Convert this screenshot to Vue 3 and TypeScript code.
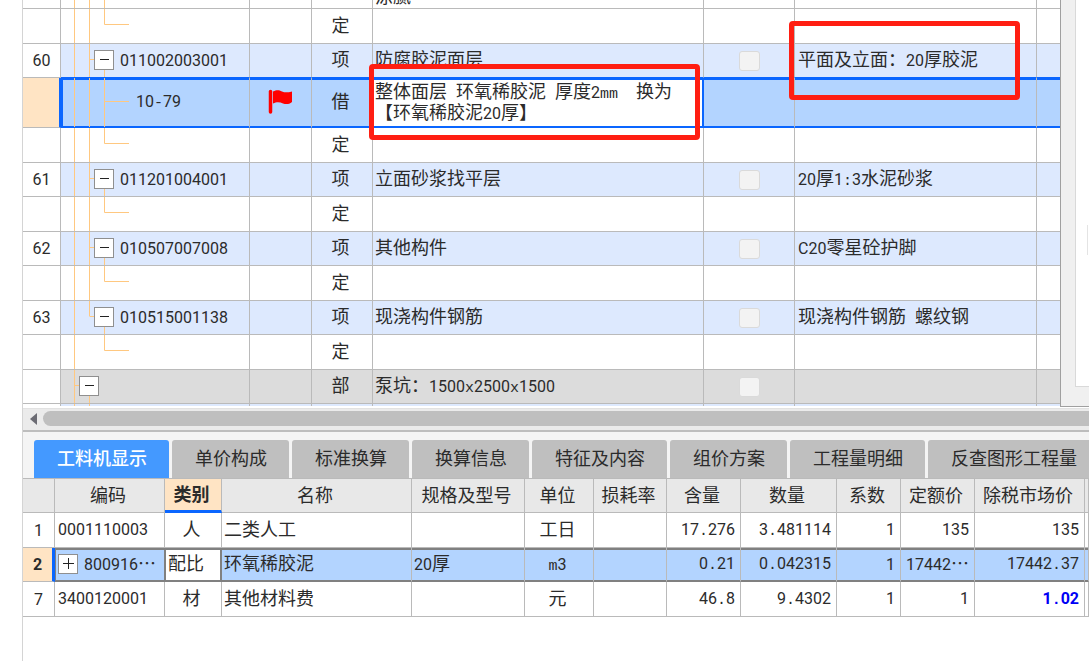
<script setup lang="ts">
import { h, type FunctionalComponent } from 'vue'

type Kind = 'cut' | 'rate' | 'item' | 'selected' | 'part' | 'tail'

interface BillRow {
  kind: Kind
  no?: string
  code?: string
  type?: string
  name?: string[]
  feature?: string
  check?: boolean
  height: number
  last?: boolean
  afterLast?: boolean
}

interface Material {
  no: string
  code: string
  category: string
  name: string
  spec: string
  unit: string
  content: string
  quantity: string
  factor: string
  quota: string
  market: string
  active?: boolean
  changed?: boolean
}

const billRows: BillRow[] = [
  { kind: 'cut', name: ['涂腻'], height: 8 },
  { kind: 'rate', type: '定', height: 34 },
  { kind: 'item', no: '60', code: '011002003001', type: '项', name: ['防腐胶泥面层'], feature: '平面及立面：20厚胶泥', check: true, height: 33 },
  { kind: 'selected', code: '10-79', type: '借', name: ['整体面层 环氧稀胶泥 厚度2mm  换为', '【环氧稀胶泥20厚】'], height: 49 },
  { kind: 'rate', type: '定', height: 34 },
  { kind: 'item', no: '61', code: '011201004001', type: '项', name: ['立面砂浆找平层'], feature: '20厚1:3水泥砂浆', check: true, height: 33 },
  { kind: 'rate', type: '定', height: 34 },
  { kind: 'item', no: '62', code: '010507007008', type: '项', name: ['其他构件'], feature: 'C20零星砼护脚', check: true, height: 33 },
  { kind: 'rate', type: '定', height: 34 },
  { kind: 'item', no: '63', code: '010515001138', type: '项', name: ['现浇构件钢筋'], feature: '现浇构件钢筋 螺纹钢', check: true, height: 33, last: true },
  { kind: 'rate', type: '定', height: 34, afterLast: true },
  { kind: 'part', type: '部', name: ['泵坑：1500x2500x1500'], check: true, height: 33 },
  { kind: 'tail', height: 1 },
]

// Tree guides, in pixels from the left edge of the code cell.
function guides(row: BillRow): string {
  const full = row.height + 1
  const mid = Math.round(row.height / 2) - 2
  const d: string[] = [`M13.5 0V${full}`]
  if (row.kind === 'part') {
    d.push(`M13.5 ${mid}.5H18`, `M28.5 ${mid + 9}V${full}`)
    return d.join('')
  }
  if (!row.afterLast) d.push(row.last ? `M28.5 0V${mid}` : `M28.5 0V${full}`)
  if (row.kind === 'item') d.push(`M28.5 ${mid}.5H33`, `M43.5 ${mid + 9}V${full}`)
  if (row.kind === 'rate') d.push(`M43.5 0V${mid}.5H68`)
  if (row.kind === 'selected') d.push(`M43.5 0V${full}`, `M43.5 ${mid}.5H68`)
  if (row.kind === 'cut') d.push(`M43.5 0V${full}`)
  return d.join('')
}

const tabs = ['工料机显示', '单价构成', '标准换算', '换算信息', '特征及内容', '组价方案', '工程量明细', '反查图形工程量']

const heads = ['', '编码', '类别', '名称', '规格及型号', '单位', '损耗率', '含量', '数量', '系数', '定额价', '除税市场价', '']

const materials: Material[] = [
  { no: '1', code: '0001110003', category: '人', name: '二类人工', spec: '', unit: '工日', content: '17.276', quantity: '3.481114', factor: '1', quota: '135', market: '135' },
  { no: '2', code: '800916…', category: '配比', name: '环氧稀胶泥', spec: '20厚', unit: 'm3', content: '0.21', quantity: '0.042315', factor: '1', quota: '17442…', market: '17442.37', active: true },
  { no: '7', code: '3400120001', category: '材', name: '其他材料费', spec: '', unit: '元', content: '46.8', quantity: '9.4302', factor: '1', quota: '1', market: '1.02', changed: true },
]

// Half-width characters take exactly half of a full-width one.
const Mixed: FunctionalComponent<{ text: string }> = (props) =>
  h(
    'span',
    { class: 'mixed' },
    (props.text.match(/[0-9C]+|[\x20-\x2f\x3a-\x42\x44-\x7e]+|[^\x20-\x7e]+/g) ?? []).map((part) =>
      h('span', { class: /^[0-9C]/.test(part) ? 'digits' : /^[\x20-\x7e]/.test(part) ? 'half' : 'full' }, part),
    ),
  )
Mixed.props = ['text']
</script>

<template>
  <main class="app">
    <div class="upper">
      <div class="bill-wrap">
        <table class="grid bill" aria-label="清单">
          <colgroup>
            <col class="b-no" /><col class="b-code" /><col class="b-flag" /><col class="b-type" />
            <col /><col class="b-check" /><col class="b-feature" /><col class="b-rest" />
          </colgroup>
          <tbody>
            <tr v-for="(row, i) in billRows" :key="i" :class="row.kind">
              <td class="no">{{ row.no }}</td>
              <td class="code">
                <svg class="guides" width="70" :height="row.height + 1" aria-hidden="true">
                  <path :d="guides(row)" />
                </svg>
                <div class="line">
                  <button v-if="row.kind === 'item' || row.kind === 'part'" class="toggle" type="button" aria-label="折叠">
                    <svg width="9" height="9" aria-hidden="true"><path d="M0 4.5H9" /></svg>
                  </button>
                  <Mixed v-if="row.code" :text="row.code" />
                </div>
              </td>
              <td class="flag">
                <svg v-if="row.kind === 'selected'" width="26" height="26" viewBox="0 0 26 26" aria-label="标记">
                  <path d="M2.500 2.500V23" stroke="#f00" stroke-width="3.500" stroke-linecap="round" />
                  <path d="M5 2.500C9 0.500 11 1 14 2.500C17 3.800 20 3.500 24 2.500V13C21 15.500 18 15.500 15 14.500C12 13 9 12.500 5 14.500Z" fill="#f00" />
                </svg>
              </td>
              <td class="type">{{ row.type }}</td>
              <td class="name">
                <div class="name-box">
                  <div v-for="text in row.name" :key="text" class="text-line"><Mixed :text="text" /></div>
                </div>
              </td>
              <td class="check"><input v-if="row.check" type="checkbox" disabled aria-label="选择" /></td>
              <td class="feature"><Mixed v-if="row.feature" :text="row.feature" /></td>
              <td></td>
            </tr>
          </tbody>
        </table>
      </div>
      <aside class="side"><div class="side-page"><div class="side-field"></div></div></aside>
    </div>

    <div class="scroll">
      <button type="button" class="arrow" aria-label="向左滚动">
        <svg width="7" height="12" aria-hidden="true"><path d="M7 0V12L0 6Z" fill="#6c6c74" /></svg>
      </button>
      <div class="thumb"></div>
    </div>

    <nav class="tabs">
      <button v-for="(tab, i) in tabs" :key="tab" type="button" :class="{ on: i === 0 }">{{ tab }}</button>
    </nav>

    <div class="detail-wrap">
      <table class="grid detail" aria-label="工料机显示">
        <colgroup>
          <col class="d-no" /><col class="d-code" /><col class="d-cat" /><col /><col class="d-spec" />
          <col class="d-unit" /><col class="d-loss" /><col class="d-content" /><col class="d-qty" />
          <col class="d-factor" /><col class="d-quota" /><col class="d-market" /><col class="d-rest" />
        </colgroup>
        <thead>
          <tr>
            <th v-for="(head, i) in heads" :key="i" :class="{ current: head === '类别' }">{{ head }}</th>
          </tr>
        </thead>
        <tbody>
          <tr v-for="m in materials" :key="m.no" :class="{ active: m.active }">
            <td class="no">{{ m.no }}</td>
            <td class="mat-code">
              <div class="line">
                <button v-if="m.active" class="toggle" type="button" aria-label="展开">
                  <svg width="11" height="11" aria-hidden="true"><path d="M0 5.500H11M5.500 0V11" /></svg>
                </button>
                <Mixed :text="m.code" />
              </div>
            </td>
            <td class="center cat">{{ m.category }}</td>
            <td class="left">{{ m.name }}</td>
            <td class="left"><Mixed :text="m.spec" /></td>
            <td class="center"><Mixed :text="m.unit" /></td>
            <td></td>
            <td class="num"><Mixed :text="m.content" /></td>
            <td class="num"><Mixed :text="m.quantity" /></td>
            <td class="num"><Mixed :text="m.factor" /></td>
            <td class="num"><Mixed :text="m.quota" /></td>
            <td class="num" :class="{ changed: m.changed }"><Mixed :text="m.market" /></td>
            <td></td>
          </tr>
        </tbody>
      </table>
    </div>

    <div class="mark mark-name"></div>
    <div class="mark mark-feature"></div>
  </main>
</template>

<style>
body {
  margin: 0;
  background: #fff;
}
</style>

<style scoped>
.app {
  position: relative;
  min-height: 100vh;
  margin-left: 22px;
  border-left: 1px solid #d4d4d4;
  box-sizing: border-box;
  overflow: hidden;
  color: #2b2b2b;
  font: 18px/21px "Noto Sans CJK SC", sans-serif;
  text-spacing-trim: space-all;
}
button {
  font: inherit;
  margin: 0;
  padding: 0;
  border: 0;
}
.app :deep(.mixed) {
  white-space: pre;
}
.app :deep(.digits) {
  font: 16px/1 Roboto, sans-serif;
}
.app :deep(.half) {
  font: 15px/1 "Liberation Mono", monospace;
}
.app :deep(.full) {
  line-height: 1;
}

.upper {
  display: flex;
  align-items: flex-start;
}
.bill-wrap {
  flex: 1;
  min-width: 0;
}
.grid {
  width: 100%;
  table-layout: fixed;
  border-collapse: separate;
  border-spacing: 0;
}
.grid td,
.grid th {
  box-sizing: border-box;
  padding: 0 0 4px;
  border-right: 1px solid #bababa;
  border-bottom: 1px solid #bababa;
  white-space: nowrap;
  overflow: hidden;
  vertical-align: middle;
}
.grid td.no,
.grid td.check,
.grid td.flag,
.cut td.name,
.grid .tail td {
  padding-bottom: 0;
}
.grid td.flag {
  padding-bottom: 2px;
}
.grid .tail td.flag,
.grid .cut td {
  padding-bottom: 0;
}
.b-no { width: 38px; }
.b-code { width: 189px; }
.b-flag { width: 62px; }
.b-type { width: 61px; }
.b-check { width: 91px; }
.b-feature { width: 242px; }
.b-rest { width: 23px; }

.bill td:last-child {
  border-right: 0;
}
.cut td { height: 9px; }
.rate td { height: 35px; }
.item td,
.part td { height: 34px; }
.selected td { height: 50px; }
.tail td {
  height: 2px;
  border-bottom: 0;
}
.item td,
.tail td {
  background: #dde9fe;
}
.part td {
  background: #dcdcdc;
}
.selected td {
  background: #b3d4ff;
  border-bottom-color: #0a66ff;
  box-shadow: inset 0 2px #0a66ff, inset 0 -1px #0a66ff;
}
.item:has(+ .selected) td:not(.no) {
  border-bottom-color: #0a66ff;
}
.bill td.no {
  background: #fff;
}
.bill .selected td.no {
  background: #ffe4c4;
  border-right: 2px solid #0a66ff;
  border-bottom-color: #bababa;
  box-shadow: none;
}
.bill .selected td.code {
  box-shadow: inset 2px 2px #0a66ff, inset 0 -1px #0a66ff;
}
.bill .selected td.name {
  background: #fff;
  border-right-color: #0a66ff;
  box-shadow: inset 1px 2px #0a66ff, inset -1px -1px #0a66ff;
}
.no {
  text-align: center;
  font: 16px/21px Roboto, sans-serif;
}
.bill .code {
  position: relative;
  padding-bottom: 2px;
}
.guides {
  position: absolute;
  left: 0;
  top: 0;
}
.guides path {
  fill: none;
  stroke: #ffc880;
}
.line {
  position: relative;
  display: flex;
  align-items: center;
  height: 20px;
}
.line .mixed {
  padding-bottom: 3px;
}
.item .line { padding-left: 33px; }
.part .line { padding-left: 18px; }
.selected .line { padding-left: 75px; }
.cut .line,
.tail .line { height: 0; }
.toggle {
  display: grid;
  place-items: center;
  box-sizing: border-box;
  width: 20px;
  height: 20px;
  margin-right: 6px;
  border: 1px solid #8f8f8f;
  background: #fff;
}
.toggle path {
  fill: none;
  stroke: #222;
}
.flag {
  text-align: center;
}
.flag svg {
  display: block;
  margin: 0 auto;
}
.type {
  text-align: center;
}
.grid td.type,
.grid th {
  padding-right: 3px;
}
.grid .name {
  padding-left: 2px;
}
.grid .feature {
  padding-left: 3px;
}
.cut .name-box {
  display: flex;
  align-items: flex-end;
  box-sizing: border-box;
  height: 8px;
  padding-bottom: 2px;
}
.text-line {
  height: 21px;
}
.check input {
  appearance: none;
  display: block;
  box-sizing: border-box;
  width: 21px;
  height: 20px;
  margin: 0 auto;
  border: 1px solid #dadada;
  border-radius: 3px;
  background: #f3f3f3;
}

.side {
  box-sizing: border-box;
  width: 29px;
  height: 407px;
  padding-left: 14px;
  border-left: 1px solid #a0a0a0;
  border-bottom: 1px solid #a0a0a0;
  background: #f0f0f0;
}
.side-page {
  box-sizing: border-box;
  height: 387px;
  padding: 225px 0 0 11px;
  border-left: 1px solid #d9d9d9;
  border-bottom: 1px solid #d9d9d9;
  background: #fff;
}
.side-field {
  height: 30px;
  border-left: 1px solid #e4e4e4;
}

.scroll {
  display: flex;
  align-items: center;
  height: 19px;
  margin-top: 1px;
  padding-bottom: 2px;
  border-top: 1px solid #e2e2e2;
  border-bottom: 2px solid #bdbdbd;
  background: #ebebeb;
}
.arrow {
  display: grid;
  place-items: center;
  width: 20px;
  height: 19px;
  background: none;
}
.thumb {
  flex: 1;
  height: 15px;
  border-radius: 8px 0 0 8px;
  background: #bfbfbf;
}

.tabs {
  display: flex;
  gap: 3px;
  padding: 8px 0 0 11px;
  background: #f4f4f4;
}
.tabs button {
  flex: none;
  height: 38px;
  padding: 0 22px 3px 23px;
  border-radius: 3px 3px 0 0;
  background: #bfbfbf;
  color: #2b2b2b;
}
.tabs .on {
  background: #4499ff;
  color: #fff;
  font-weight: 500;
}

.d-no { width: 32px; }
.d-code { width: 110px; }
.d-cat { width: 57px; }
.d-spec { width: 113px; }
.d-unit { width: 69px; }
.d-loss { width: 73px; }
.d-content { width: 74px; }
.d-qty { width: 96px; }
.d-factor { width: 64px; }
.d-quota { width: 74px; }
.d-market { width: 110px; }
.d-rest { width: 4px; }
.detail-wrap {
  border-top: 1px solid #bababa;
}
.detail th {
  height: 34px;
  padding-bottom: 2px;
  background: #e8e8e8;
  font-weight: 400;
}
.detail th.current {
  border-bottom: 3px solid #0a66ff;
  background: #ffe4c4;
  font-weight: 700;
}
.detail td {
  height: 35px;
}
.detail .active td {
  height: 34px;
}
.detail .mat-code {
  padding-bottom: 2px;
  padding-left: 3px;
}
.detail .left {
  padding-left: 2px;
}
.center {
  text-align: center;
}
.detail .center {
  padding-right: 3px;
}
.detail .num {
  padding-right: 5px;
  padding-bottom: 5px;
  text-align: right;
}
.detail .active td {
  background: #b3d4ff;
  border-bottom-color: #808080;
  box-shadow: inset 0 2px #808080, inset 0 -1px #808080;
}
.detail .active td.no {
  border-right: 3px solid #0a66ff;
  border-bottom-color: #bababa;
  background: #ffe4c4;
  box-shadow: none;
  font-weight: 700;
}
.detail .active td.mat-code {
  border-right-color: #808080;
  box-shadow: inset 1px 2px #808080, inset 0 -1px #808080;
}
.detail .active td.cat {
  padding-left: 3px;
  border-right-color: #808080;
  background: #fff;
  text-align: left;
  box-shadow: inset 1px 2px #808080, inset -1px -1px #808080;
}
.changed {
  color: #0000f5;
}
.changed :deep(.digits),
.changed :deep(.half) {
  font-weight: 700;
}

.mark {
  position: absolute;
  box-sizing: border-box;
  border: 5px solid #ff1e12;
  border-radius: 4px;
  pointer-events: none;
}
.mark-name {
  left: 346px;
  top: 64px;
  width: 331px;
  height: 76px;
}
.mark-feature {
  left: 766px;
  top: 21px;
  width: 231px;
  height: 79px;
}
</style>
